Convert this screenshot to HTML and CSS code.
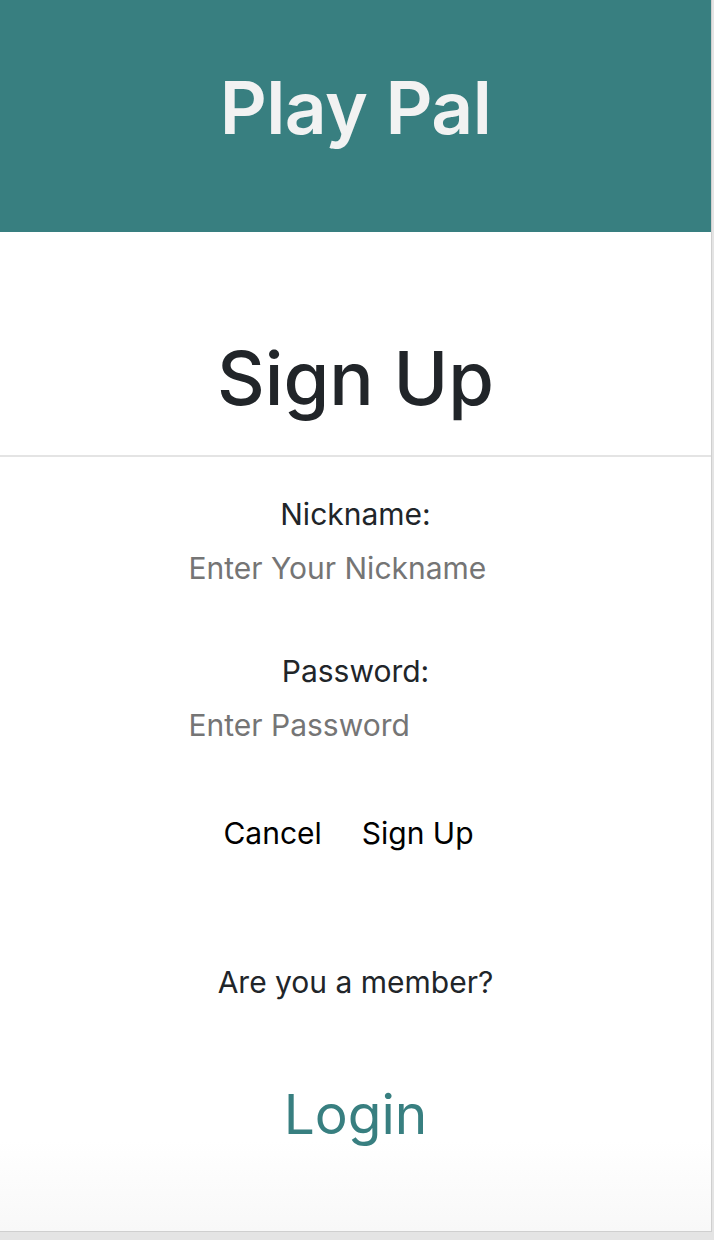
FILE: index.html
```html
<!DOCTYPE html>
<html lang="en">
<head>
<meta charset="utf-8">
<title>Play Pal - Sign Up</title>
<link rel="stylesheet" href="styles.css">
</head>
<body>
<div class="page">
  <header class="topbar">
    <h1 class="brand">Play Pal</h1>
  </header>
  <section class="title-block">
    <h2 class="title">Sign Up</h2>
  </section>
  <form class="signup-form">
    <div class="field">
      <label class="field-label" for="nick">Nickname:</label>
      <input class="field-input" id="nick" type="text" placeholder="Enter Your Nickname">
    </div>
    <div class="field">
      <label class="field-label" for="pass">Password:</label>
      <input class="field-input" id="pass" type="password" placeholder="Enter Password">
    </div>
    <div class="actions">
      <button class="btn" type="button">Cancel</button>
      <button class="btn" type="submit">Sign Up</button>
    </div>
  </form>
  <section class="member">
    <p class="member-text">Are you a member?</p>
    <a class="login-link" href="#">Login</a>
  </section>
</div>
</body>
</html>
```
FILE: styles.css
```css
html, body {
  margin: 0;
  padding: 0;
}
body {
  background: #e4e4e4;
  font-family: Inter, "Noto Sans", "Liberation Sans", sans-serif;
  color: #212529;
}
.page {
  width: 712px;
  height: 1232px;
  box-sizing: border-box;
  border-right: 1px solid #cfcfcf;
  border-bottom: 1px solid #cfcfcf;
  background: linear-gradient(to bottom, #ffffff calc(100% - 90px), #f8f8f8);
  display: flex;
  flex-direction: column;
  align-items: stretch;
}
.topbar {
  height: 232px;
  background: #387f80;
  display: flex;
  justify-content: center;
  align-items: flex-start;
}
.brand {
  margin: 64px 0 0;
  font-size: 73px;
  line-height: 88px;
  font-weight: 600;
  color: #f2f2f2;
  letter-spacing: -0.5px;
}
.title-block {
  height: 223px;
  border-bottom: 2px solid #e4e4e4;
  display: flex;
  justify-content: center;
  align-items: flex-start;
}
.title {
  margin: 102px 0 0;
  font-size: 74px;
  line-height: 88px;
  font-weight: 500;
  color: #212529;
}
.signup-form {
  display: flex;
  flex-direction: column;
  align-items: center;
  padding-top: 39px;
}
.field {
  display: flex;
  flex-direction: column;
  align-items: center;
  margin-bottom: 67px;
}
.field-label {
  font-size: 30px;
  line-height: 36px;
  color: #212529;
}
.field-input {
  width: 338px;
  box-sizing: border-box;
  border: none;
  outline: none;
  padding: 0 2px;
  margin-top: 18px;
  font-family: inherit;
  font-size: 30px;
  line-height: 36px;
  height: 36px;
  color: #212529;
  background: transparent;
}
.field-input::placeholder {
  color: #757575;
}
.actions {
  display: flex;
  gap: 28px;
  margin-top: 5px;
  margin-right: 14px;
}
.btn {
  border: none;
  background: transparent;
  font-family: inherit;
  font-size: 30px;
  line-height: 36px;
  color: #000;
  padding: 0 6px;
}
.member {
  display: flex;
  flex-direction: column;
  align-items: center;
  padding-top: 113px;
}
.member-text {
  margin: 0;
  font-size: 30px;
  line-height: 36px;
  color: #212529;
}
.login-link {
  margin-top: 81px;
  font-size: 55px;
  line-height: 66px;
  color: #387f80;
  text-decoration: none;
}
```
